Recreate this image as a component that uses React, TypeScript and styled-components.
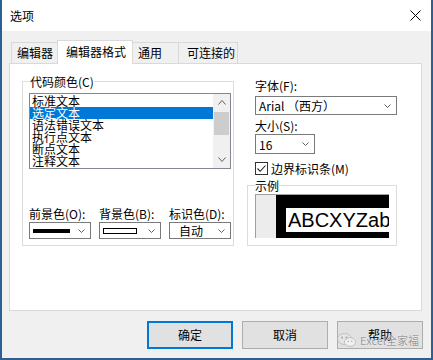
import React from "react";
import styled, { createGlobalStyle } from "styled-components";

const GlobalStyle = createGlobalStyle`
  html, body { margin: 0; padding: 0; background: #ffffff; }
  body {
    font-family: "Noto Sans CJK SC", "Noto Sans", sans-serif;
    font-size: 12px;
    color: #000;
  }
  * { box-sizing: border-box; }
`;

const Window = styled.div`
  position: relative;
  width: 433px;
  height: 360px;
  display: flex;
  flex-direction: column;
  background: #f0f0f0;
  border: 2px solid #2c5f94;
  border-top: none;
`;

const TitleBar = styled.div`
  height: 31px;
  flex: none;
  background: #ffffff;
  display: flex;
  align-items: center;
  justify-content: space-between;
  padding: 0 10px 0 8px;
`;

const Title = styled.span`
  font-size: 12px;
  line-height: 14px;
`;

const Body = styled.div`
  flex: 1;
  display: flex;
  flex-direction: column;
  padding: 9px 9px 9px 7px;
`;

const TabStrip = styled.div`
  height: 23px;
  display: flex;
  align-items: flex-end;
  padding-left: 2px;
`;

const Tab = styled.div<{ $w: number; $pl: number; $active?: boolean }>`
  position: relative;
  z-index: ${(p) => (p.$active ? 1 : 0)};
  width: ${(p) => p.$w}px;
  height: ${(p) => (p.$active ? 24 : 21)}px;
  margin-bottom: ${(p) => (p.$active ? -1 : 0)}px;
  margin-left: -1px;
  &:first-child { margin-left: 0; }
  background: ${(p) => (p.$active ? "#ffffff" : "#f0f0f0")};
  border: 1px solid #d9d9d9;
  border-bottom: none;
  display: flex;
  align-items: center;
  padding-left: ${(p) => p.$pl}px;
  padding-bottom: ${(p) => (p.$active ? 2 : 0)}px;
  font-size: 12px;
  line-height: 14px;
  white-space: nowrap;
`;

const Panel = styled.div`
  height: 248px;
  background: #ffffff;
  border: 1px solid #d9d9d9;
  display: flex;
  align-items: flex-start;
  gap: 13px;
  padding: 11px 0 0 12px;
`;

const Group = styled.fieldset<{ $w: number }>`
  width: ${(p) => p.$w}px;
  min-width: 0;
  margin: 0;
  border: 1px solid #dcdcdc;
  padding: 5px 2px 6px 6px;
`;

const Legend = styled.legend<{ $pad?: number }>`
  padding: 0 ${(p) => p.$pad ?? 1}px;
  font-size: 12px;
  line-height: 13px;
`;

const ListBox = styled.div`
  width: 202px;
  height: 76px;
  border: 1px solid #828790;
  display: flex;
  background: #fff;
`;

const ListItems = styled.div`
  flex: 1;
  padding: 1px 0;
  overflow: hidden;
`;

const ListItem = styled.div<{ $selected?: boolean }>`
  height: 12px;
  line-height: 12px;
  padding-left: 2px;
  font-size: 12px;
  white-space: nowrap;
  background: ${(p) => (p.$selected ? "#0078d7" : "transparent")};
  color: ${(p) => (p.$selected ? "#ffffff" : "#000000")};
`;

const ScrollBar = styled.div`
  width: 17px;
  background: #f0f0f0;
  display: flex;
  flex-direction: column;
`;

const ScrollButton = styled.div`
  height: 17px;
  display: flex;
  align-items: center;
  justify-content: center;
`;

const Thumb = styled.div`
  height: 23px;
  margin: 1px 1px 0 1px;
`;

const ThumbFill = styled(Thumb)`
  background: #cdcdcd;
`;

const Spacer = styled.div`
  flex: 1;
`;

const ColorGrid = styled.div`
  display: grid;
  grid-template-columns: repeat(3, 62px);
  column-gap: 8px;
  row-gap: 2px;
  margin-top: 38px;
`;

const Label = styled.div<{ $indent?: number; $mt?: number }>`
  font-size: 12px;
  line-height: 13px;
  height: 13px;
  white-space: nowrap;
  margin-left: ${(p) => p.$indent ?? 0}px;
  margin-top: ${(p) => p.$mt ?? 0}px;
`;

const Combo = styled.div<{ $w?: number; $h: number; $indent?: number; $mt?: number; $pl?: number }>`
  width: ${(p) => (p.$w ? `${p.$w}px` : "auto")};
  height: ${(p) => p.$h}px;
  margin-left: ${(p) => p.$indent ?? 0}px;
  margin-top: ${(p) => p.$mt ?? 0}px;
  border: 1px solid #7a7a7a;
  background: #ffffff;
  display: flex;
  align-items: center;
  justify-content: space-between;
  padding: 0 5px 0 ${(p) => p.$pl ?? 3}px;
  font-size: 12px;
  line-height: 13px;
  white-space: nowrap;
`;

const SolidSwatch = styled.div`
  width: 37px;
  height: 4px;
  background: #000;
`;

const OutlineSwatch = styled.div`
  width: 34px;
  height: 6px;
  border: 1px solid #000;
  background: #fff;
`;

const RightColumn = styled.div`
  width: 150px;
  display: flex;
  flex-direction: column;
`;

const CheckRow = styled.div`
  margin: 8px 0 0 8px;
  height: 13px;
  display: flex;
  align-items: center;
  gap: 3px;
  font-size: 12px;
  line-height: 13px;
  white-space: nowrap;
`;

const CheckBox = styled.div`
  width: 13px;
  height: 13px;
  border: 1px solid #333;
  background: #fff;
  display: flex;
  align-items: center;
  justify-content: center;
`;

const SampleGroup = styled.fieldset`
  width: 150px;
  min-width: 0;
  margin: 4px 0 0 0;
  border: 1px solid #dcdcdc;
  padding: 2px 7px 7px 7px;
`;

const Sample = styled.div`
  width: 134px;
  height: 44px;
  border-top: 1px solid #a0a0a0;
  border-left: 1px solid #a0a0a0;
  background: #ececec;
  display: flex;
`;

const SampleGutter = styled.div`
  width: 20px;
  flex: none;
`;

const SampleBlack = styled.div`
  flex: 1;
  background: #000;
  display: flex;
  padding: 13px 0 6px 10px;
  overflow: hidden;
`;

const SampleWhite = styled.div`
  flex: 1;
  background: #fff;
  overflow: hidden;
  white-space: nowrap;
  font-family: "Liberation Sans", Arial, sans-serif;
  font-size: 20px;
  line-height: 24px;
  padding-left: 2px;
`;

const ButtonRow = styled.div`
  display: flex;
  justify-content: flex-end;
  gap: 9px;
  margin: 10px -1px 0 0;
`;

const Button = styled.div<{ $default?: boolean }>`
  width: 86px;
  height: 28px;
  background: #e1e1e1;
  border: ${(p) => (p.$default ? "2px solid #0078d7" : "1px solid #adadad")};
  display: flex;
  align-items: center;
  justify-content: center;
  font-size: 12px;
  line-height: 14px;
`;

const Watermark = styled.div`
  position: absolute;
  right: 12px;
  bottom: 11px;
  display: flex;
  align-items: center;
  gap: 3px;
  opacity: 0.85;
  pointer-events: none;
`;

const WatermarkText = styled.span`
  font-size: 11px;
  line-height: 14px;
  color: #8c8c8c;
  text-shadow: 0 0 1px #fff, 0 0 1px #fff;
  white-space: nowrap;
`;

const Chevron = ({ up, w = 7, h = 4, color = "#606060" }: { up?: boolean; w?: number; h?: number; color?: string }) => (
  <svg width={w} height={h} viewBox={`0 0 ${w} ${h}`}>
    <polyline
      points={
        up
          ? `0.5,${h - 0.5} ${w / 2},0.5 ${w - 0.5},${h - 0.5}`
          : `0.5,0.5 ${w / 2},${h - 0.5} ${w - 0.5},0.5`
      }
      fill="none"
      stroke={color}
      strokeWidth="1"
    />
  </svg>
);

const CloseIcon = () => (
  <svg width="11" height="11" viewBox="0 0 11 11">
    <line x1="0.5" y1="0.5" x2="10.5" y2="10.5" stroke="#000" strokeWidth="1" />
    <line x1="10.5" y1="0.5" x2="0.5" y2="10.5" stroke="#000" strokeWidth="1" />
  </svg>
);

const CheckMark = () => (
  <svg width="11" height="11" viewBox="0 0 11 11">
    <polyline points="1.5,5.5 4.2,8.3 9.5,2.5" fill="none" stroke="#222" strokeWidth="1.1" />
  </svg>
);

const WeChatIcon = () => (
  <svg width="20" height="14" viewBox="0 0 20 14">
    <ellipse cx="7.5" cy="6" rx="7" ry="5.5" fill="#e6e6e6" stroke="#b0b0b0" strokeWidth="0.8" />
    <ellipse cx="13" cy="9" rx="5.5" ry="4.3" fill="#f4f4f4" stroke="#b0b0b0" strokeWidth="0.8" />
    <circle cx="5" cy="4.5" r="0.9" fill="#999" />
    <circle cx="9.5" cy="4.5" r="0.9" fill="#999" />
    <circle cx="11.3" cy="8.2" r="0.7" fill="#999" />
    <circle cx="14.8" cy="8.2" r="0.7" fill="#999" />
  </svg>
);

const tabs = [
  { label: "编辑器", w: 47, pl: 5 },
  { label: "编辑器格式", w: 76, pl: 8, active: true },
  { label: "通用", w: 47, pl: 5 },
  { label: "可连接的", w: 60, pl: 8 },
];

const items = ["标准文本", "选定文本", "语法错误文本", "执行点文本", "断点文本", "注释文本"];

export default function App() {
  return (
    <>
      <GlobalStyle />
      <Window>
        <TitleBar>
          <Title>选项</Title>
          <CloseIcon />
        </TitleBar>
        <Body>
          <TabStrip>
            {tabs.map((t) => (
              <Tab key={t.label} $w={t.w} $pl={t.pl} $active={t.active}>
                {t.label}
              </Tab>
            ))}
          </TabStrip>
          <Panel>
            <Group $w={212}>
              <Legend>代码颜色(C)</Legend>
              <ListBox>
                <ListItems>
                  {items.map((it, i) => (
                    <ListItem key={it} $selected={i === 1}>
                      {it}
                    </ListItem>
                  ))}
                </ListItems>
                <ScrollBar>
                  <ScrollButton>
                    <Chevron up w={8} h={5} />
                  </ScrollButton>
                  <ThumbFill />
                  <Spacer />
                  <ScrollButton>
                    <Chevron w={8} h={5} />
                  </ScrollButton>
                </ScrollBar>
              </ListBox>
              <ColorGrid>
                <Label>前景色(O):</Label>
                <Label>背景色(B):</Label>
                <Label>标识色(D):</Label>
                <Combo $h={17}>
                  <SolidSwatch />
                  <Chevron />
                </Combo>
                <Combo $h={17}>
                  <OutlineSwatch />
                  <Chevron />
                </Combo>
                <Combo $h={17} $pl={9}>
                  <span>自动</span>
                  <Chevron />
                </Combo>
              </ColorGrid>
            </Group>
            <RightColumn>
              <Label $indent={8} $mt={4}>字体(F):</Label>
              <Combo $w={142} $h={19} $indent={8} $mt={4}>
                <span>Arial （西方）</span>
                <Chevron />
              </Combo>
              <Label $indent={8} $mt={4}>大小(S):</Label>
              <Combo $w={60} $h={20} $indent={8} $mt={2}>
                <span>16</span>
                <Chevron />
              </Combo>
              <CheckRow>
                <CheckBox>
                  <CheckMark />
                </CheckBox>
                <span>边界标识条(M)</span>
              </CheckRow>
              <SampleGroup>
                <Legend $pad={0}>示例</Legend>
                <Sample>
                  <SampleGutter />
                  <SampleBlack>
                    <SampleWhite>ABCXYZabc</SampleWhite>
                  </SampleBlack>
                </Sample>
              </SampleGroup>
            </RightColumn>
          </Panel>
          <ButtonRow>
            <Button $default>确定</Button>
            <Button>取消</Button>
            <Button>帮助</Button>
          </ButtonRow>
        </Body>
        <Watermark>
          <WeChatIcon />
          <WatermarkText>Excel全家福</WatermarkText>
        </Watermark>
      </Window>
    </>
  );
}
